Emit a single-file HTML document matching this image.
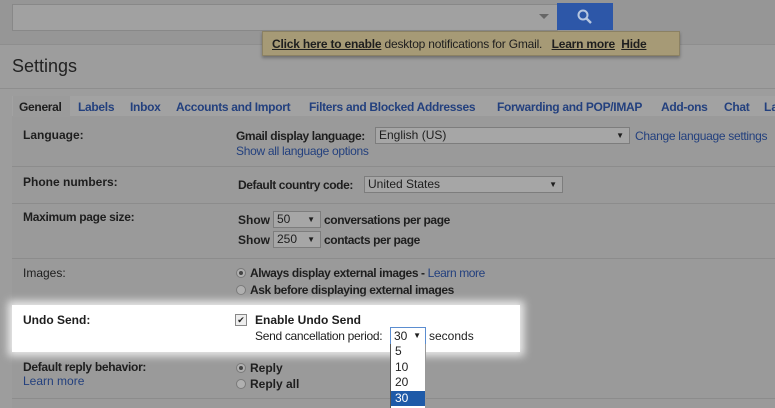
<!DOCTYPE html>
<html><head><style>
body{margin:0;width:775px;height:408px;overflow:hidden;background:#9d9d9d;font-family:"Liberation Sans",Arial,sans-serif;font-size:12px;color:#1e1e1e;position:relative}
.a{position:absolute;white-space:nowrap}
a,.l{color:#23407e}
.b{font-weight:bold}
.sel{position:absolute;background:#a6a6a6;border:1px solid #7d7d7d;height:15px;font-size:12px;line-height:15px;padding-left:3px;box-sizing:content-box;white-space:nowrap}
.sel i{position:absolute;right:5px;top:0;font-style:normal;font-size:8px}
.hr{position:absolute;left:12px;right:0;height:1px;background:#8c8c8c}
.rad{display:inline-block;width:10px;height:10px;border-radius:50%;background:#b0b0b0;border:1px solid #7a7a7a;vertical-align:-1px;margin-right:4px;box-sizing:border-box;position:relative}
</style></head><body>
<div class="a" style="left:0;top:0;width:775px;height:44px;background:#969696"></div>
<div class="a" style="left:12px;top:4px;width:544px;height:25px;background:#a1a1a1;border:1px solid #888"></div>
<div class="a" style="left:539px;top:14px;width:0;height:0;border-left:5px solid transparent;border-right:5px solid transparent;border-top:5px solid #666"></div>
<div class="a" style="left:557px;top:3px;width:56px;height:27px;background:#2d57a8"></div>
<svg class="a" style="left:576px;top:8px" width="18" height="18"><circle cx="7" cy="7" r="4.5" stroke="#b8c7e0" stroke-width="2" fill="none"/><line x1="10" y1="10" x2="15" y2="15" stroke="#b8c7e0" stroke-width="2.4"/></svg>
<div class="a" style="left:0;top:44px;width:775px;height:1px;background:#8e8e8e"></div>
<div class="a" style="left:262px;top:31px;width:418px;height:25px;background:#a69a76;border:1px solid #8b8163;box-shadow:0 2px 3px rgba(0,0,0,.3);font-size:12px;line-height:25px;padding-left:9px;box-sizing:border-box;color:#1e1e1e;letter-spacing:-0.2px"><u class="b">Click here to enable</u> desktop notifications for Gmail.&nbsp;&nbsp;&nbsp;<u class="b">Learn more</u>&nbsp;&nbsp;<u class="b">Hide</u></div>
<div class="a" style="left:12px;top:56px;font-size:18px;color:#222">Settings</div>
<div class="a" style="left:0;top:88px;width:775px;height:1px;background:#8e8e8e"></div>
<div class="a" style="left:12px;top:96px;width:763px;height:20px;background:#a2a2a2"></div>
<div class="a" style="left:12px;top:116px;width:763px;height:292px;background:#9a9a9a"></div>
<div class="a" style="left:13px;top:96px;width:57px;height:21px;background:#9b9b9b"></div>
<div class="a b" style="left:19px;top:100px;color:#1e1e1e;letter-spacing:-0.3px">General</div>
<div class="a b l" style="left:78px;top:100px;letter-spacing:-0.3px">Labels</div>
<div class="a b l" style="left:130px;top:100px;letter-spacing:-0.3px">Inbox</div>
<div class="a b l" style="left:176px;top:100px;letter-spacing:-0.3px">Accounts and Import</div>
<div class="a b l" style="left:309px;top:100px;letter-spacing:-0.3px">Filters and Blocked Addresses</div>
<div class="a b l" style="left:497px;top:100px;letter-spacing:-0.3px">Forwarding and POP/IMAP</div>
<div class="a b l" style="left:661px;top:100px;letter-spacing:-0.3px">Add-ons</div>
<div class="a b l" style="left:724px;top:100px;letter-spacing:-0.3px">Chat</div>
<div class="a b l" style="left:764px;top:100px">La</div>

<div class="a b" style="left:23px;top:128px">Language:</div>
<div class="a b" style="left:236px;top:129px;letter-spacing:-0.4px">Gmail display language:</div>
<div class="sel" style="left:375px;top:127px;width:250px">English (US)<i>▼</i></div>
<div class="a l" style="left:635px;top:129px;letter-spacing:-0.3px">Change language settings</div>
<div class="a l" style="left:236px;top:144px;letter-spacing:-0.3px">Show all language options</div>
<div class="hr" style="top:166px"></div>

<div class="a b" style="left:23px;top:175px">Phone numbers:</div>
<div class="a b" style="left:238px;top:178px;letter-spacing:-0.4px">Default country code:</div>
<div class="sel" style="left:364px;top:176px;width:194px">United States<i>▼</i></div>
<div class="hr" style="top:203px"></div>

<div class="a b" style="left:23px;top:210px;letter-spacing:-0.3px">Maximum page size:</div>
<div class="a b" style="left:238px;top:213px">Show</div>
<div class="sel" style="left:273px;top:211px;width:43px">50<i>▼</i></div>
<div class="a b" style="left:324px;top:213px;letter-spacing:-0.4px">conversations per page</div>
<div class="a b" style="left:238px;top:233px">Show</div>
<div class="sel" style="left:273px;top:231px;width:43px">250<i>▼</i></div>
<div class="a b" style="left:324px;top:233px;letter-spacing:-0.4px">contacts per page</div>
<div class="hr" style="top:258px"></div>

<div class="a" style="left:23px;top:266px">Images:</div>
<div class="a b" style="left:236px;top:266px;letter-spacing:-0.4px"><span class="rad"><span style="position:absolute;left:2px;top:2px;width:4px;height:4px;border-radius:50%;background:#444"></span></span>Always display external images - <span class="l" style="font-weight:normal">Learn more</span></div>
<div class="a b" style="left:236px;top:283px;letter-spacing:-0.4px"><span class="rad"></span>Ask before displaying external images</div>

<div class="a" style="left:12px;top:305px;width:508px;height:47px;background:#fff;box-shadow:0 0 8px 4px rgba(255,255,255,.8)"></div>
<div class="a b" style="left:23px;top:313px">Undo Send:</div>
<div class="a" style="left:235px;top:314px;width:10px;height:10px;border:1px solid #888;background:#eee;font-size:9px;line-height:10px;text-align:center">✔</div>
<div class="a b" style="left:255px;top:313px">Enable Undo Send</div>
<div class="a" style="left:255px;top:329px;letter-spacing:-0.3px">Send cancellation period:</div>
<div class="a" style="left:390px;top:327px;width:31px;height:16px;border:1px solid #5b8dd0;background:#fff;line-height:16px;padding-left:3px;box-sizing:content-box">30<span style="position:absolute;right:4px;font-size:8px">▼</span></div>
<div class="a" style="left:429px;top:329px">seconds</div>

<div class="a b" style="left:23px;top:360px;letter-spacing:-0.3px">Default reply behavior:</div>
<div class="a l" style="left:23px;top:374px">Learn more</div>
<div class="a b" style="left:236px;top:361px"><span class="rad"><span style="position:absolute;left:2px;top:2px;width:4px;height:4px;border-radius:50%;background:#444"></span></span>Reply</div>
<div class="a b" style="left:236px;top:377px"><span class="rad"></span>Reply all</div>
<div class="hr" style="top:398px"></div>

<div class="a" style="left:390px;top:344px;width:34px;height:64px;background:#fff;border-left:1px solid #555;border-right:1px solid #999;line-height:15.5px;font-size:12px;color:#222">
<div style="padding-left:4px">5</div><div style="padding-left:4px">10</div><div style="padding-left:4px">20</div><div style="padding-left:4px;background:#1e5aa8;color:#fff">30</div></div>
</body></html>
